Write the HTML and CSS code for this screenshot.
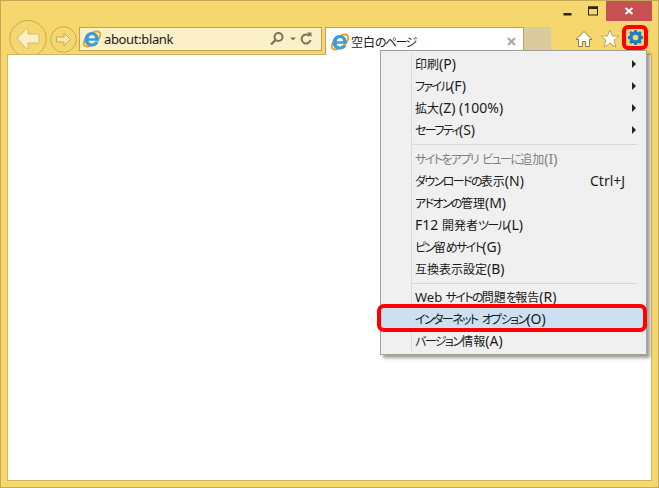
FILE: index.html
```html
<!DOCTYPE html>
<html>
<head>
<meta charset="UTF-8">
<title>about:blank</title>
<link rel="stylesheet" href="styles.css">
</head>
<body>

<div class="window">

	<div class="caption">
		<span class="capbtn"><svg width="9" height="10" viewBox="0 0 9 10"><rect x="0.5" y="7" width="8" height="2.5" fill="#2b2413"/></svg></span>
		<span class="capbtn"><svg width="12" height="11" viewBox="0 0 12 11"><rect x="1.5" y="1" width="9" height="8" fill="none" stroke="#2b2413" stroke-width="1"/><rect x="1" y="0.5" width="10" height="2.5" fill="#2b2413"/></svg></span>
		<span class="capclose"><svg width="10" height="10" viewBox="0 0 10 10"><path d="M1.5 2L8.5 8M8.5 2L1.5 8" stroke="#fff" stroke-width="2"/></svg></span>
	</div>

	<div class="toolbar">
		<svg class="back" width="40" height="34" viewBox="0 0 40 34">
			<circle cx="19" cy="18.7" r="18.2" fill="none" stroke="#c2aa5e" stroke-width="1"/>
			<path d="M8 18.5L17.5 8.5Q19 7.5 19 9.5V14H28.5Q30 14 30 15.5V21.5Q30 23 28.5 23H19V27.5Q19 29.5 17.5 28.5Z" fill="#fcf0c4" stroke="#cdb872" stroke-width="1"/>
		</svg>
		<svg class="forward" width="27" height="27" viewBox="0 0 27 27">
			<circle cx="13.5" cy="13.5" r="12.8" fill="none" stroke="#c2aa5e" stroke-width="1"/>
			<path d="M20.5 13.5L14 7V11H6.5V16H14V20Z" fill="#f9e7a8" stroke="#c2aa5e" stroke-width="1"/>
		</svg>

		<div class="address">
			<svg width="18" height="18" viewBox="0 0 18 18">
				<ellipse cx="9" cy="9" rx="10" ry="5" transform="rotate(-40 9 9)" fill="none" stroke="#f0a010" stroke-width="1.8"/>
				<path d="M9 2C4.6 2 1.5 5.4 1.5 9.4 1.5 13.6 4.6 16.5 8.9 16.5 12.2 16.5 14.6 14.8 15.6 12.2H11.6C11 13.1 10.1 13.6 9.1 13.6 7.3 13.6 5.9 12.6 5.6 10.8H16C16.3 5.8 13.2 2 9 2ZM5.7 8.2C6 6.4 7.3 5.1 9 5.1 10.7 5.1 12 6.4 12.2 8.2Z" fill="#3a9ce0"/>
			</svg>
			<span class="url">about:blank</span>
			<svg width="50" height="16" viewBox="0 0 50 16">
				<circle cx="9.5" cy="6" r="4" fill="none" stroke="#7d7458" stroke-width="2"/>
				<path d="M6.5 9L2 13.5" stroke="#7d7458" stroke-width="2.4"/>
				<path d="M21 6.5H27L24 9.5Z" fill="#7d7458"/>
				<path d="M40.5 5A4.5 4.5 0 1 0 41.5 9" fill="none" stroke="#7d7458" stroke-width="2"/>
				<path d="M38 1.5H42.5V6Z" fill="#7d7458"/>
			</svg>
		</div>

		<div class="tab">
			<svg width="18" height="18" viewBox="0 0 18 18">
				<ellipse cx="9" cy="9" rx="10" ry="5" transform="rotate(-40 9 9)" fill="none" stroke="#f0a010" stroke-width="1.8"/>
				<path d="M9 2C4.6 2 1.5 5.4 1.5 9.4 1.5 13.6 4.6 16.5 8.9 16.5 12.2 16.5 14.6 14.8 15.6 12.2H11.6C11 13.1 10.1 13.6 9.1 13.6 7.3 13.6 5.9 12.6 5.6 10.8H16C16.3 5.8 13.2 2 9 2ZM5.7 8.2C6 6.4 7.3 5.1 9 5.1 10.7 5.1 12 6.4 12.2 8.2Z" fill="#3a9ce0"/>
			</svg>
			<span class="tabtitle">空白<span class="k">のページ</span></span>
			<svg width="9" height="9" viewBox="0 0 9 9"><path d="M1 1L8 8M8 1L1 8" stroke="#a8a8a8" stroke-width="2.2"/></svg>
		</div>
		<div class="newtab"></div>

		<div class="tools">
			<svg class="home" width="18" height="18" viewBox="0 0 18 18"><path d="M9 1.5L17 9.5H14.5V16.5H10.7V11.5H7.3V16.5H3.5V9.5H1Z" fill="#fff" stroke="#8a7a45" stroke-width="1"/></svg>
			<svg class="star" width="20" height="19" viewBox="0 0 20 19"><path d="M10 1L12.6 7H19L14 11.2 15.8 18 10 14.2 4.2 18 6 11.2 1 7H7.4Z" fill="#fff" stroke="#a5955c" stroke-width="0.8"/></svg>
			<span class="gearbox">
				<svg width="17" height="17" viewBox="0 0 18 18">
					<circle cx="9" cy="9" r="5" fill="none" stroke="#1c7fc4" stroke-width="3.4"/>
					<path d="M9 1V17M1 9H17M3.3 3.3L14.7 14.7M14.7 3.3L3.3 14.7" stroke="#1c7fc4" stroke-width="3"/>
					<circle cx="9" cy="9" r="3" fill="#f5d76e"/>
				</svg>
			</span>
		</div>
	</div>

	<div class="page"></div>

	<div class="menu">
		<div class="item"><span>印刷<span class="l">(P)</span></span><i class="arrow"></i></div>
		<div class="item"><span><span class="k">ファイル</span><span class="l">(F)</span></span><i class="arrow"></i></div>
		<div class="item"><span>拡大<span class="l">(Z) (100%)</span></span><i class="arrow"></i></div>
		<div class="item"><span><span class="k">セーフティ</span><span class="l">(S)</span></span><i class="arrow"></i></div>
		<div class="sep first"></div>
		<div class="item off"><span><span class="k">サイトをアプリ ビューに</span>追加<span class="l">(I)</span></span></div>
		<div class="item"><span><span class="k">ダウンロードの</span>表示<span class="l">(N)</span></span><span class="key">Ctrl+J</span></div>
		<div class="item"><span><span class="k">アドオンの</span>管理<span class="l">(M)</span></span></div>
		<div class="item"><span><span class="l">F12 </span>開発者<span class="k">ツール</span><span class="l">(L)</span></span></div>
		<div class="item"><span><span class="k">ピン</span>留<span class="k">めサイト</span><span class="l">(G)</span></span></div>
		<div class="item"><span>互換表示設定<span class="l">(B)</span></span></div>
		<div class="sep"></div>
		<div class="item"><span><span class="web">Web </span><span class="k">サイトの</span>問題<span class="k">を</span>報告<span class="l">(R)</span></span></div>
		<div class="item selected"><span><span class="k">インターネット オプション</span><span class="l">(O)</span></span></div>
		<div class="item"><span><span class="k">バージョン</span>情報<span class="l">(A)</span></span></div>
	</div>

</div>

</body>
</html>
```

FILE: styles.css
```css
* {
	box-sizing: border-box;
}

body {
	margin: 0;
	font-family: "Noto Sans CJK JP", "Liberation Sans", sans-serif;
	font-size: 12px;
	color: #1a1a1a;
}

.window {
	position: relative;
	display: flex;
	flex-direction: column;
	width: 659px;
	height: 488px;
	background: #f5d76e;
	border: 1px solid #c3a957;
}

.caption {
	display: flex;
	justify-content: flex-end;
	align-items: flex-start;
	height: 19px;
	padding-right: 6px;
}

.capbtn {
	display: flex;
	align-items: center;
	justify-content: center;
	width: 26px;
	height: 20px;
}

.capclose {
	display: flex;
	align-items: center;
	justify-content: center;
	width: 46px;
	height: 20px;
	background: #c75050;
}

.toolbar {
	display: flex;
	align-items: flex-start;
	height: 34px;
}

.back {
	flex: none;
	margin-left: 8px;
}

.forward {
	flex: none;
	margin: 6px 0 0 1px;
}

.address {
	display: flex;
	align-items: center;
	width: 243px;
	height: 24px;
	margin: 7px 0 0 2px;
	padding: 0 2px 0 3px;
	background: #fcf0c8;
	border: 1px solid #bca34f;
}

.url {
	flex: 1;
	margin-left: 3px;
	font-family: "Noto Sans", sans-serif;
	font-size: 13px;
	letter-spacing: -0.35px;
	line-height: 20px;
}

.tab {
	position: relative;
	z-index: 1;
	display: flex;
	align-items: center;
	width: 199px;
	height: 28px;
	margin: 7px 0 0 3px;
	padding: 0 7px 0 5px;
	background: #fff;
	border: 1px solid #bca34f;
	border-bottom: 0;
}

.tabtitle {
	flex: 1;
	margin-left: 2px;
	font-feature-settings: "palt";
}

.newtab {
	width: 27px;
	height: 27px;
	margin-top: 7px;
	background: #dacb9c;
}

.tools {
	display: flex;
	align-items: center;
	margin: 5px 10px 0 auto;
}

.home {
	margin: 2px 7px 0 0;
}

.star {
	margin: 1px 2px 0 0;
}

.gearbox {
	display: flex;
	align-items: center;
	justify-content: center;
	width: 26px;
	height: 25px;
	border: 4px solid #f00;
	border-radius: 6px;
}

.page {
	flex: 1;
	margin: 0 6px 6px 6px;
	background: #fff;
	border: 1px solid #cdb565;
}

.menu {
	position: absolute;
	z-index: 2;
	left: 379px;
	top: 49px;
	width: 267px;
	height: 305px;
	padding-top: 2px;
	background: #f0f0f0;
	border: 1px solid #a0a0a0;
	box-shadow: 3px 3px 3px rgba(90, 80, 50, 0.55);
}

/* gutter line */
.menu::before {
	content: "";
	position: absolute;
	left: 30px;
	top: 2px;
	bottom: 2px;
	width: 1px;
	background: #dcdcdc;
}

.item {
	position: relative;
	display: flex;
	align-items: center;
	height: 22px;
	padding-left: 34px;
	font-size: 12px;
	line-height: 22px;
	white-space: nowrap;
	font-feature-settings: "palt";
}

/* kana runs are narrow in the original UI font */
.k {
	letter-spacing: -1.6px;
	word-spacing: 3px;
}

.l {
	font-family: "Noto Sans", sans-serif;
	font-size: 14px;
}

.web {
	font-family: "Noto Sans", sans-serif;
	font-size: 13px;
}

.off {
	color: #808080;
}

.key {
	position: absolute;
	left: 209px;
	font-family: "Noto Sans", sans-serif;
	font-size: 14px;
}

.arrow {
	position: absolute;
	right: 10px;
	top: 7px;
	border-left: 4px solid #222;
	border-top: 4px solid transparent;
	border-bottom: 4px solid transparent;
}

.sep {
	height: 6px;
	margin: 0 9px 0 30px;
	padding-top: 3px;
}

.sep::after {
	content: "";
	display: block;
	height: 1px;
	background: #d7d7d7;
}

.sep.first {
	height: 7px;
}

.selected {
	background: #cde0f2;
}

/* red marker drawn over the screenshot */
.selected::after {
	content: "";
	position: absolute;
	left: -4px;
	right: -1px;
	top: -4px;
	bottom: -2px;
	border: 4px solid #f00;
	border-radius: 7px;
}
```
